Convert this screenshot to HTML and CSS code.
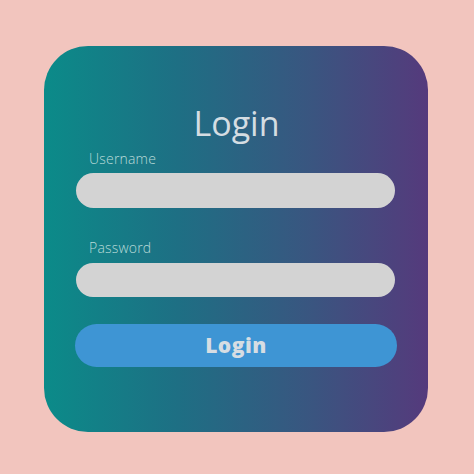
FILE: index.html
```html
<!DOCTYPE html>
<html lang="en">
<head>
<meta charset="utf-8">
<title>Login</title>
<link rel="stylesheet" href="styles.css">
</head>
<body>
<form class="card">
  <h1 class="title">Login</h1>
  <label class="label label-user" for="user">Username</label>
  <input class="field" id="user" type="text">
  <label class="label label-pass" for="pass">Password</label>
  <input class="field field-pass" id="pass" type="password">
  <button class="submit" type="button">Login</button>
</form>
</body>
</html>
```
FILE: styles.css
```css
html, body {
  margin: 0;
  padding: 0;
}
body {
  background: #f2c5be;
  width: 474px;
  height: 474px;
  overflow: hidden;
  font-family: "Open Sans", "Liberation Sans", sans-serif;
}
.card {
  box-sizing: border-box;
  margin: 46px 0 0 44px;
  width: 384px;
  height: 386px;
  border-radius: 44px;
  background: linear-gradient(90deg, #0b8b89 0%, #1e6f84 35%, #3a5580 70%, #553a7c 100%);
  padding: 57px 33px 0 32px;
  display: flex;
  flex-direction: column;
}
.title {
  margin: 0;
  font-size: 34px;
  line-height: 40px;
  font-weight: 400;
  color: #d5dde2;
  text-align: center;
  letter-spacing: 0;
  padding-left: 2px;
}
.label {
  display: block;
  font-size: 14px;
  line-height: 16px;
  font-weight: 300;
  color: #b9dad8;
  padding-left: 13px;
  letter-spacing: 0.2px;
}
.label-user {
  margin-top: 8px;
}
.label-pass {
  margin-top: 32px;
}
.field {
  display: block;
  box-sizing: border-box;
  margin: 6px 0 0 0;
  width: 100%;
  height: 35px;
  border: none;
  border-radius: 18px;
  background: #d3d3d3;
  outline: none;
  padding: 0 16px;
}
.field-pass {
  margin-top: 7px;
  height: 34px;
}
.submit {
  margin: 27px -2px 0 -1px;
  height: 43px;
  border: none;
  border-radius: 22px;
  background: #3e95d4;
  color: #d6dde3;
  font-family: "Open Sans", "Liberation Sans", sans-serif;
  font-weight: 800;
  font-size: 21px;
  line-height: 43px;
  padding: 0;
  letter-spacing: 0.5px;
}
```
